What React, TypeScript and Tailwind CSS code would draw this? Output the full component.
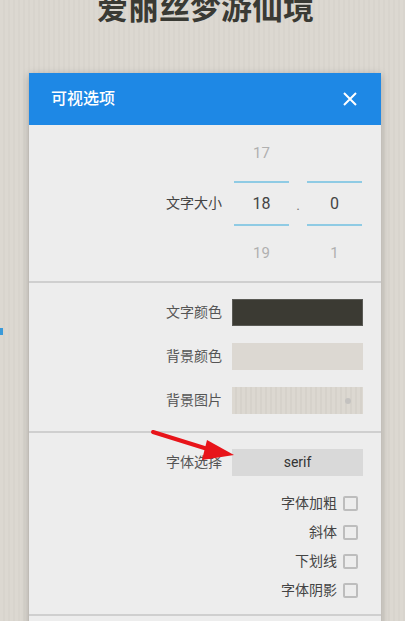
import React from "react";

const cjk = { fontFamily: 'Roboto, "Noto Sans CJK SC", sans-serif' };

function ColorRow({ label, box }: { label: string; box: string }) {
  return (
    <div className="flex items-center justify-end pr-[18px] h-[27px]">
      <span className="text-[14px] text-[#555] mr-[10px]">{label}</span>
      <div className={box} />
    </div>
  );
}

function CheckRow({ label }: { label: string }) {
  return (
    <div className="flex items-center justify-end pr-[23px] h-[29px]">
      <span className="text-[14px] text-[#444] mr-[6px]">{label}</span>
      <div className="w-[15px] h-[15px] border-2 border-[#bdbdbd] rounded-[2px]" />
    </div>
  );
}

function PickerCol({ top, mid, bot }: { top: string; mid: string; bot: string }) {
  return (
    <div className="flex flex-col w-[55px]">
      <div className="h-[56px] flex items-center justify-center text-[15px] text-[#b0b0b0]">{top}</div>
      <div className="h-[2px] bg-[#8fcbe4]" />
      <div className="h-[41px] flex items-center justify-center text-[16px] text-[#444]">{mid}</div>
      <div className="h-[2px] bg-[#8fcbe4]" />
      <div className="h-[55px] flex items-center justify-center text-[15px] text-[#b0b0b0]">{bot}</div>
    </div>
  );
}

export default function App() {
  return (
    <div
      className="relative w-[405px] h-[621px] overflow-hidden bg-[repeating-linear-gradient(90deg,#dcd8d1_0px,#dcd8d1_3px,#d8d4cd_3px,#d8d4cd_5px)]"
      style={cjk}
    >
      <div className="h-[73px] flex flex-col items-center">
        <div className="mt-[-7px] ml-[6px] text-[31px] leading-[31px] font-bold text-[#3a3a34]">爱丽丝梦游仙境</div>
      </div>
      <div className="absolute left-0 top-[328px] w-[3px] h-[7px] bg-[#3a9ad9]" />
      <div className="ml-[29px] w-[352px] bg-[#ededed] shadow-[0_2px_8px_rgba(0,0,0,0.25)]">
        <div className="h-[52px] bg-[#1e88e5] flex items-center justify-between pl-[22px] pr-[24px]">
          <span className="text-[16px] font-medium text-white">可视选项</span>
          <svg width="14" height="14" viewBox="0 0 14 14">
            <path d="M1 1L13 13M13 1L1 13" stroke="white" strokeWidth="2" />
          </svg>
        </div>
        <div className="flex items-center justify-end pr-[19px] h-[156px]">
          <span className="text-[14px] text-[#444] mr-[12px]">文字大小</span>
          <PickerCol top="17" mid="18" bot="19" />
          <div className="w-[18px] text-center text-[14px] text-[#777] pt-[4px]">.</div>
          <PickerCol top="" mid="0" bot="1" />
        </div>
        <div className="h-[2px] bg-[#cfcfcf]" />
        <div className="flex flex-col gap-[17px] pt-[16px] pb-[17px]">
          <ColorRow label="文字颜色" box="w-[131px] h-[27px] bg-[#3b3a33] border border-[#5a5a55]" />
          <ColorRow label="背景颜色" box="w-[131px] h-[27px] bg-[#dcd8d2]" />
          <div className="flex items-center justify-end pr-[18px] h-[27px]">
            <span className="text-[14px] text-[#555] mr-[10px]">背景图片</span>
            <div className="relative w-[131px] h-[27px] bg-[repeating-linear-gradient(90deg,#dcd8d1_0px,#dcd8d1_3px,#d6d2cb_3px,#d6d2cb_5px)] flex items-center justify-end pr-[12px]">
              <div className="w-[6px] h-[6px] rounded-full bg-[#c4c2c0]" />
            </div>
          </div>
        </div>
        <div className="h-[2px] bg-[#cfcfcf]" />
        <div className="pt-[16px] pb-[9px]">
          <div className="flex items-center justify-end pr-[18px] h-[27px]">
            <span className="text-[14px] text-[#555] mr-[10px]">字体选择</span>
            <div className="w-[131px] h-[27px] bg-[#d9d9d9] flex items-center justify-center text-[14px] text-[#333]">serif</div>
          </div>
          <div className="mt-[13px] flex flex-col">
            <CheckRow label="字体加粗" />
            <CheckRow label="斜体" />
            <CheckRow label="下划线" />
            <CheckRow label="字体阴影" />
          </div>
        </div>
        <div className="h-[2px] bg-[#cfcfcf]" />
        <div className="h-[20px]" />
      </div>
      <svg className="absolute left-0 top-0 pointer-events-none" width="405" height="621" viewBox="0 0 405 621">
        <path d="M153 432L214 451" stroke="#e8141a" strokeWidth="4" strokeLinecap="round" />
        <polygon points="207,440 234,455 202,460" fill="#e8141a" />
      </svg>
    </div>
  );
}
